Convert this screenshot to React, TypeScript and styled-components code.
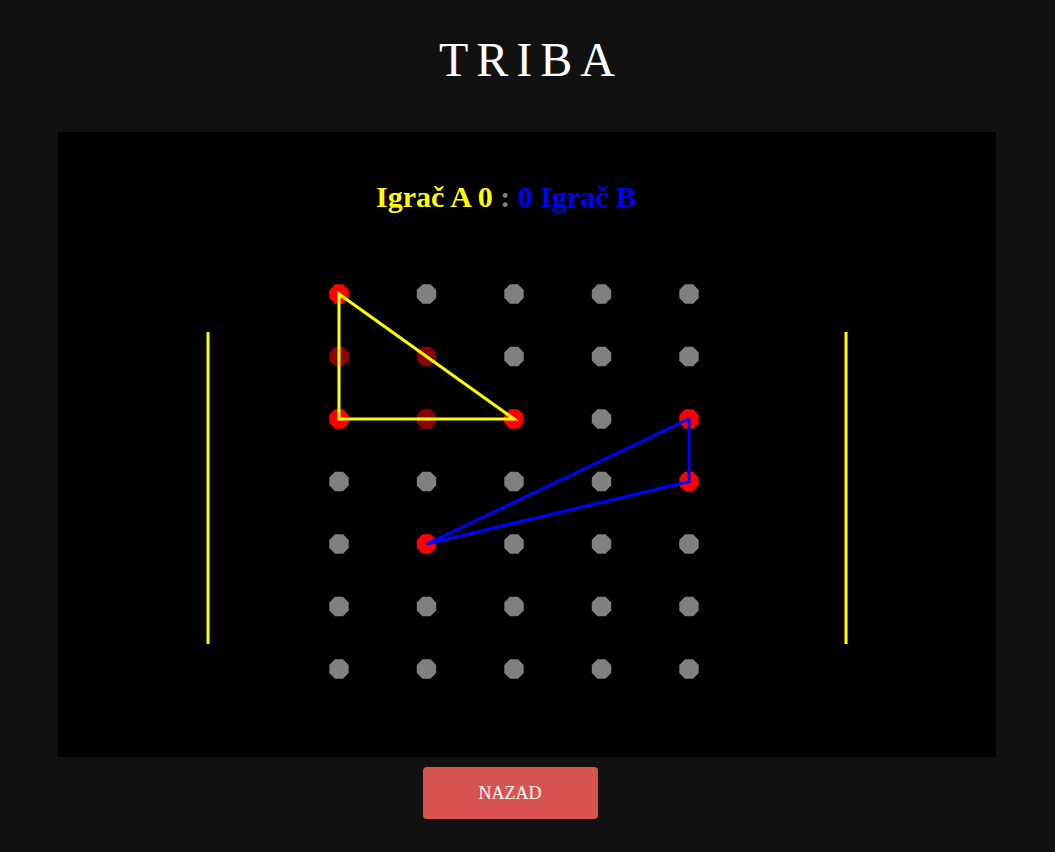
import React from "react";
import styled, { createGlobalStyle } from "styled-components";

const Global = createGlobalStyle`
  html, body { margin: 0; padding: 0; background: #111111; }
  body { font-family: "Liberation Serif", "Times New Roman", serif; color: #fff; }
`;

const Page = styled.div`
  display: flex;
  flex-direction: column;
  align-items: center;
  padding-top: 34px;
  padding-right: 1px;
`;

const Title = styled.h1`
  margin: 0 0 46px;
  font-family: "Liberation Serif", serif;
  font-weight: normal;
  font-size: 48px;
  line-height: 52px;
  letter-spacing: 8px;
  padding-left: 8px;
  color: #ffffff;
`;

const Board = styled.div`
  width: 938px;
  height: 625px;
  background: #000000;
`;

const Actions = styled.div`
  display: flex;
  justify-content: center;
  padding-top: 10px;
  margin-left: -34px;
`;

const Button = styled.button`
  width: 175px;
  height: 52px;
  background: #d9534f;
  border: none;
  border-radius: 4px;
  color: #ffffff;
  font-family: "Liberation Serif", serif;
  font-size: 18px;
  cursor: pointer;
`;

const COLS = 5;
const ROWS = 7;
const X0 = 281;
const DX = 87.5;
const Y0 = 162;
const DY = 62.5;

const px = (i: number) => X0 + DX * i;
const py = (j: number) => Y0 + DY * j;

const red = new Set(["0,0", "0,2", "2,2", "4,2", "4,3", "1,4"]);
const dark = new Set(["0,1", "1,1", "1,2"]);

function octagon(cx: number, cy: number, r: number) {
  const pts: string[] = [];
  for (let k = 0; k < 8; k++) {
    const a = Math.PI / 8 + (k * Math.PI) / 4;
    pts.push(`${(cx + r * Math.cos(a)).toFixed(2)},${(cy + r * Math.sin(a)).toFixed(2)}`);
  }
  return pts.join(" ");
}

const tri = (pts: [number, number][]) => pts.map(([i, j]) => `${px(i)},${py(j)}`).join(" ");

export default function App() {
  const dots: React.ReactNode[] = [];
  for (let j = 0; j < ROWS; j++) {
    for (let i = 0; i < COLS; i++) {
      const key = `${i},${j}`;
      const fill = red.has(key) ? "#ff0000" : dark.has(key) ? "#8b0000" : "#808080";
      dots.push(<polygon key={key} points={octagon(px(i), py(j), 10.5)} fill={fill} />);
    }
  }
  return (
    <>
      <Global />
      <Page>
        <Title>TRIBA</Title>
        <Board>
          <svg width="938" height="625" viewBox="0 0 938 625">
            <text
              x="318"
              y="75"
              fontFamily="'Liberation Serif', serif"
              fontWeight="bold"
              fontSize="30"
            >
              <tspan fill="#ffff00">Igrač A 0</tspan>
              <tspan fill="#808080"> : </tspan>
              <tspan fill="#0000ff">0 Igrač B</tspan>
            </text>
            <line x1="150" y1="200" x2="150" y2="512" stroke="#ffff00" strokeWidth="3" />
            <line x1="788" y1="200" x2="788" y2="512" stroke="#ffff00" strokeWidth="3" />
            {dots}
            <polygon
              points={tri([[0, 0], [2, 2], [0, 2]])}
              fill="none"
              stroke="#ffff00"
              strokeWidth="3"
            />
            <polygon
              points={tri([[4, 2], [4, 3], [1, 4]])}
              fill="none"
              stroke="#0000ff"
              strokeWidth="3"
            />
          </svg>
        </Board>
        <Actions>
          <Button>NAZAD</Button>
        </Actions>
      </Page>
    </>
  );
}
